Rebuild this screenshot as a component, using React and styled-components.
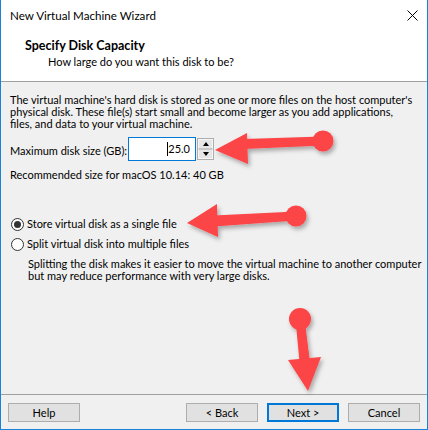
import React from "react";
import styled, {createGlobalStyle} from "styled-components";

const Global = createGlobalStyle`
	html, body {
		margin: 0;
		background: #ffffff;
	}
	body {
		font-family: Lato, "Liberation Sans", sans-serif;
		font-size: 11px;
		color: #000;
	}
	* { box-sizing: border-box; }
`;

const RED = "#fc4446";

const Arrow = ({circle, shaft, head}) => (
	<g>
		<polygon points={shaft}/>
		<circle cx={circle[0]} cy={circle[1]} r={circle[2]}/>
		<polygon points={head}/>
	</g>
);

const Wizard = () => {
	return (
		<Window>
			<TitleBar>
				<TitleText>{'New Virtual Machine Wizard'}</TitleText>
				<CloseButton>
					<svg width="11" height="11" viewBox="0 0 11 11">
						<path d="M0.5 0.5 L10.5 10.5 M10.5 0.5 L0.5 10.5" stroke="#000" strokeWidth="1" fill="none"/>
					</svg>
				</CloseButton>
			</TitleBar>

			<Header>
				<HeaderTitle>{'Specify Disk Capacity'}</HeaderTitle>
				<HeaderSubtitle>{'How large do you want this disk to be?'}</HeaderSubtitle>
			</Header>

			<Body>
				<Paragraph>
					{"The virtual machine's hard disk is stored as one or more files on the host computer's"}<br/>
					{"physical disk. These file(s) start small and become larger as you add applications,"}<br/>
					{"files, and data to your virtual machine."}
				</Paragraph>

				<SizeRow>
					<FieldLabel>{'Maximum disk size (GB):'}</FieldLabel>
					<NumberBox>
						<Caret/>
						{'25.0'}
					</NumberBox>
					<Spinner>
						<SpinButton><Triangle $up/></SpinButton>
						<SpinButton><Triangle/></SpinButton>
					</Spinner>
				</SizeRow>

				<Hint>{'Recommended size for macOS 10.14: 40 GB'}</Hint>

				<RadioGroup>
					<RadioRow>
						<RadioCircle $checked/>
						<span>{'Store virtual disk as a single file'}</span>
					</RadioRow>
					<RadioRow>
						<RadioCircle/>
						<span>{'Split virtual disk into multiple files'}</span>
					</RadioRow>
					<Description>
						{'Splitting the disk makes it easier to move the virtual machine to another computer'}<br/>
						{'but may reduce performance with very large disks.'}
					</Description>
				</RadioGroup>
			</Body>

			<Footer>
				<Button>{'Help'}</Button>
				<Spacer/>
				<Button>{'< Back'}</Button>
				<Button $primary>{'Next >'}</Button>
				<Button>{'Cancel'}</Button>
			</Footer>

			<Annotations width="428" height="430" viewBox="0 0 428 430">
				<defs>
					<filter id="shadow" x="-20%" y="-20%" width="140%" height="140%">
						<feDropShadow dx="2" dy="3" stdDeviation="2" floodColor="#000" floodOpacity="0.3"/>
					</filter>
				</defs>
				<g fill={RED} filter="url(#shadow)">
					<Arrow
						circle={[323, 141, 10.5]}
						shaft="244,139 323,136.5 323,145.5 244,149"
						head="215,150 247,133 248,164"
					/>
					<Arrow
						circle={[296, 216, 10.5]}
						shaft="214,215.5 296,211.5 296,220.5 214,226.5"
						head="187,223 217,204 218,237"
					/>
					<Arrow
						circle={[300, 319, 11]}
						shaft="295.5,319 304.5,319 310,362 299.5,362"
						head="288,360 321,357 308,391"
					/>
				</g>
			</Annotations>
		</Window>
	);
};

const Window = styled.div`
	position: relative;
	width: 428px;
	height: 430px;
	display: flex;
	flex-direction: column;
	background: #f0f0f0;
	border: 1px solid #1883d7;
	border-top: none;
`

const TitleBar = styled.div`
	height: 30px;
	flex: none;
	display: flex;
	align-items: center;
	justify-content: space-between;
	padding: 1px 9px 0 9px;
	background: #ffffff;
`

const TitleText = styled.span`
	font-size: 11.6px;
	color: #000;
`

const CloseButton = styled.span`
	display: flex;
	align-items: center;
`

const Header = styled.div`
	height: 52px;
	flex: none;
	padding: 8px 0 0 24px;
	background: #ffffff;
	border-bottom: 1px solid #a0a0a0;
`

const HeaderTitle = styled.div`
	font-size: 12.5px;
	font-weight: 700;
	line-height: 15px;
`

const HeaderSubtitle = styled.div`
	margin: 1px 0 0 23px;
	line-height: 15px;
`

const Body = styled.div`
	flex: 1;
	padding: 12px 9px 0 9px;
	line-height: 12px;
`

const Paragraph = styled.p`
	margin: 0;
	white-space: nowrap;
`

const SizeRow = styled.div`
	display: flex;
	align-items: center;
	margin-top: 7px;
	height: 24px;
`

const FieldLabel = styled.span`
	margin-top: 3px;
	width: 118px;
`

const NumberBox = styled.div`
	width: 68px;
	height: 24px;
	display: flex;
	align-items: center;
	justify-content: flex-end;
	padding-right: 5px;
	background: #ffffff;
	border: 1px solid #0078d7;
`

const Caret = styled.span`
	width: 1px;
	height: 14px;
	background: #000;
`

const Spinner = styled.div`
	display: flex;
	flex-direction: column;
	margin-left: 1px;
	width: 17px;
	height: 22px;
	border: 1px solid #adadad;
	background: #e6e6e6;
`

const SpinButton = styled.div`
	flex: 1;
	display: flex;
	align-items: center;
	justify-content: center;
	border: 1px solid #f7f7f7;
	border-bottom-color: #c8c8c8;
	&:last-child {
		border-bottom-color: #f7f7f7;
		border-top-color: #c8c8c8;
	}
`

const Triangle = styled.span`
	width: 0;
	height: 0;
	border-left: 3.5px solid transparent;
	border-right: 3.5px solid transparent;
	${p => p.$up ? 'border-bottom: 4px solid #000;' : 'border-top: 4px solid #000;'}
`

const Hint = styled.div`
	margin-top: 8px;
`

const RadioGroup = styled.div`
	margin-top: 33px;
`

const RadioRow = styled.div`
	display: flex;
	align-items: center;
	height: 20px;
	gap: 3px;
	margin-left: 1px;
`

const RadioCircle = styled.span`
	width: 13px;
	height: 13px;
	border-radius: 50%;
	border: 1px solid #333;
	background: #ffffff;
	display: flex;
	align-items: center;
	justify-content: center;
	&::after {
		content: '';
		display: ${p => p.$checked ? 'block' : 'none'};
		width: 7px;
		height: 7px;
		border-radius: 50%;
		background: #333;
	}
`

const Description = styled.p`
	margin: 4px 0 0 18px;
	white-space: nowrap;
`

const Footer = styled.div`
	flex: none;
	display: flex;
	gap: 9px;
	padding: 8px 7px 7px 7px;
	border-top: 1px solid #a0a0a0;
`

const Spacer = styled.div`
	flex: 1;
`

const Button = styled.div`
	width: 72px;
	height: 19px;
	display: flex;
	align-items: center;
	justify-content: center;
	background: #e1e1e1;
	border: ${p => p.$primary ? '2px solid #0078d7' : '1px solid #adadad'};
	font-size: 11px;
`

const Annotations = styled.svg`
	position: absolute;
	top: 0;
	left: -1px;
	pointer-events: none;
`

const App = () => (
	<>
		<Global/>
		<Wizard/>
	</>
);

export default App;
